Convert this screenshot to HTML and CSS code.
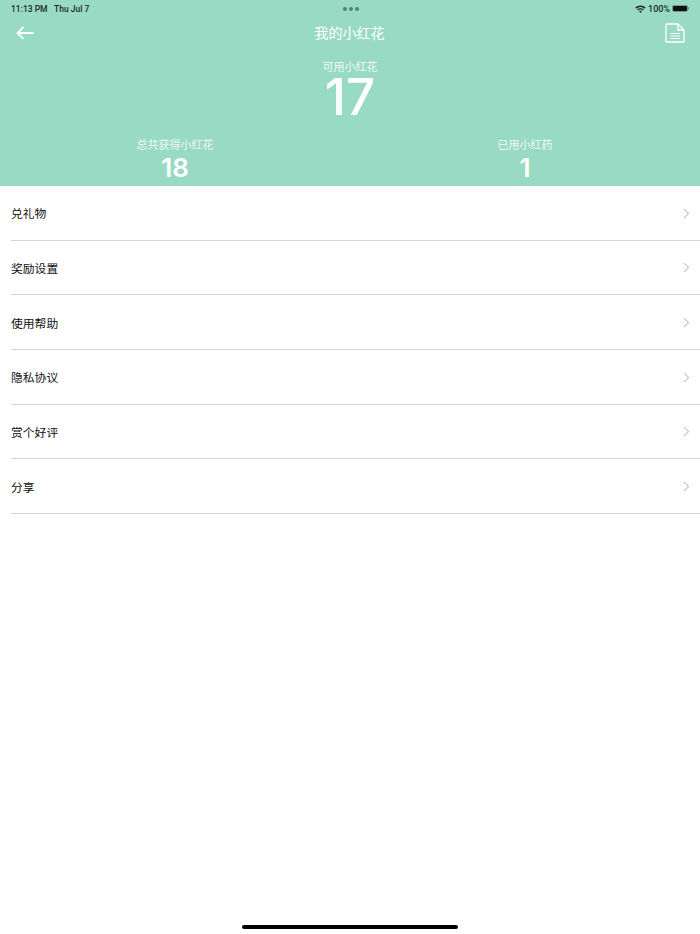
FILE: index.html
```html
<!DOCTYPE html>
<html lang="zh">
<head>
    <meta charset="UTF-8">
    <meta name="viewport" content="width=device-width, initial-scale=1.0">
    <title>我的小红花</title>
    <link rel="stylesheet" href="styles.css">
</head>
<body>
    <div class="page">
        <header class="top">
            <div class="status">
                <div class="status-left">
                    <span>11:13 PM</span>
                    <span>Thu Jul 7</span>
                </div>
                <div class="dots"><i></i><i></i><i></i></div>
                <div class="status-right">
                    <svg class="wifi" width="11" height="8" viewBox="0 0 11 8">
                        <path d="M0.3 2.6 A7.4 7.4 0 0 1 10.7 2.6 L9.6 3.7 A5.8 5.8 0 0 0 1.4 3.7 Z" fill="#1c2b27"/>
                        <path d="M2.2 4.5 A4.7 4.7 0 0 1 8.8 4.5 L7.7 5.6 A3.1 3.1 0 0 0 3.3 5.6 Z" fill="#1c2b27"/>
                        <path d="M4.1 6.4 A2 2 0 0 1 6.9 6.4 L5.5 7.9 Z" fill="#1c2b27"/>
                    </svg>
                    <span>100%</span>
                    <div class="battery"><div class="battery-fill"></div></div>
                    <div class="battery-cap"></div>
                </div>
            </div>

            <div class="nav">
                <svg class="back" width="18" height="14" viewBox="0 0 18 14">
                    <path d="M17.5 7 H1.5 M7.5 1 L1.5 7 L7.5 13" fill="none" stroke="#fff" stroke-width="1.8"/>
                </svg>
                <h1>我的小红花</h1>
                <svg class="doc" width="20" height="20" viewBox="0 0 20 20">
                    <path d="M1.6 1 H13 L19 7 V18.4 Q19 19 18.4 19 H1.6 Q1 19 1 18.4 V1.6 Q1 1 1.6 1 Z M13 1 V7 H19" fill="none" stroke="#fff" stroke-width="1.3"/>
                    <path d="M5.5 10.5 H15 M5.5 13 H15 M5.5 15.5 H15" fill="none" stroke="#fff" stroke-width="1.2"/>
                </svg>
            </div>

            <div class="available">
                <div class="label">可用小红花</div>
                <div class="big-num">17</div>
            </div>

            <div class="stats">
                <div class="stat">
                    <div class="label">总共获得小红花</div>
                    <div class="num">18</div>
                </div>
                <div class="stat">
                    <div class="label">已用小红药</div>
                    <div class="num">1</div>
                </div>
            </div>
        </header>

        <ul class="menu">
            <li><span>兑礼物</span><i class="arrow"></i></li>
            <li><span>奖励设置</span><i class="arrow"></i></li>
            <li><span>使用帮助</span><i class="arrow"></i></li>
            <li><span>隐私协议</span><i class="arrow"></i></li>
            <li><span>赏个好评</span><i class="arrow"></i></li>
            <li><span>分享</span><i class="arrow"></i></li>
        </ul>

        <div class="home-bar"></div>
    </div>
</body>
</html>
```

FILE: styles.css
```css
* {
    box-sizing: border-box;
}

html,
body {
    margin: 0;
    padding: 0;
    background-color: #fff;
}

body {
    font-family: "Liberation Sans", "Noto Sans CJK SC", sans-serif;
}

.page {
    display: flex;
    flex-direction: column;
    height: 934px;
    overflow: hidden;
}

.top {
    height: 186px;
    background-color: #99dac4;
    color: #fff;
}

.status {
    display: grid;
    grid-template-columns: 1fr auto 1fr;
    align-items: center;
    height: 16px;
    padding: 1px 10px 0 11px;
    font-family: Roboto, "Liberation Sans", sans-serif;
    font-size: 8.5px;
    font-weight: 500;
    color: #1c2b27;
}

.status-left {
    display: flex;
    gap: 6.5px;
}

.status-right {
    display: flex;
    justify-content: flex-end;
    align-items: center;
    gap: 2px;
    padding-right: 1px;
    font-size: 9px;
}

.dots {
    display: flex;
    gap: 2px;
}

.dots i {
    width: 4px;
    height: 4px;
    border-radius: 50%;
    background-color: #4f8577;
}

.battery {
    width: 16px;
    height: 7px;
    padding: 1px;
    border-radius: 2px;
    background-color: #6f9c8e;
}

.battery-fill {
    height: 100%;
    border-radius: 1px;
    background-color: #111;
}

.battery-cap {
    width: 1px;
    height: 3px;
    margin-left: -2px;
    background-color: #6f9c8e;
}

.nav {
    display: flex;
    justify-content: space-between;
    align-items: center;
    height: 33px;
    padding: 0 15px 0 16px;
}

.nav h1 {
    margin: 0 0 2px;
    font-size: 14px;
    font-weight: 400;
}

.available {
    margin-top: 9px;
    text-align: center;
}

.label {
    padding-top: 1px;
    font-size: 11px;
    line-height: 16px;
    opacity: 0.85;
}

.big-num {
    margin-top: -1px;
    font-family: Inter, "Liberation Sans", sans-serif;
    font-size: 51px;
    font-weight: 500;
    line-height: 46px;
}

.stats {
    display: grid;
    grid-template-columns: 1fr 1fr;
    margin-top: 16px;
    text-align: center;
}

.num {
    margin-top: -1px;
    font-family: Inter, "Liberation Sans", sans-serif;
    font-size: 26px;
    font-weight: 600;
    line-height: 32px;
}

.menu {
    margin: 0;
    padding: 0 0 0 11px;
    list-style: none;
}

.menu li {
    display: flex;
    justify-content: space-between;
    align-items: center;
    height: 54.7px;
    padding-right: 13px;
    border-bottom: 1px solid #d6d6d6;
    font-size: 11.8px;
    color: #111;
}

.arrow {
    width: 6.5px;
    height: 6.5px;
    border-top: 1px solid #bbb;
    border-right: 1px solid #bbb;
    transform: rotate(45deg);
}

.home-bar {
    width: 216px;
    height: 4px;
    margin: auto auto 5px;
    border-radius: 2px;
    background-color: #000;
}
```
